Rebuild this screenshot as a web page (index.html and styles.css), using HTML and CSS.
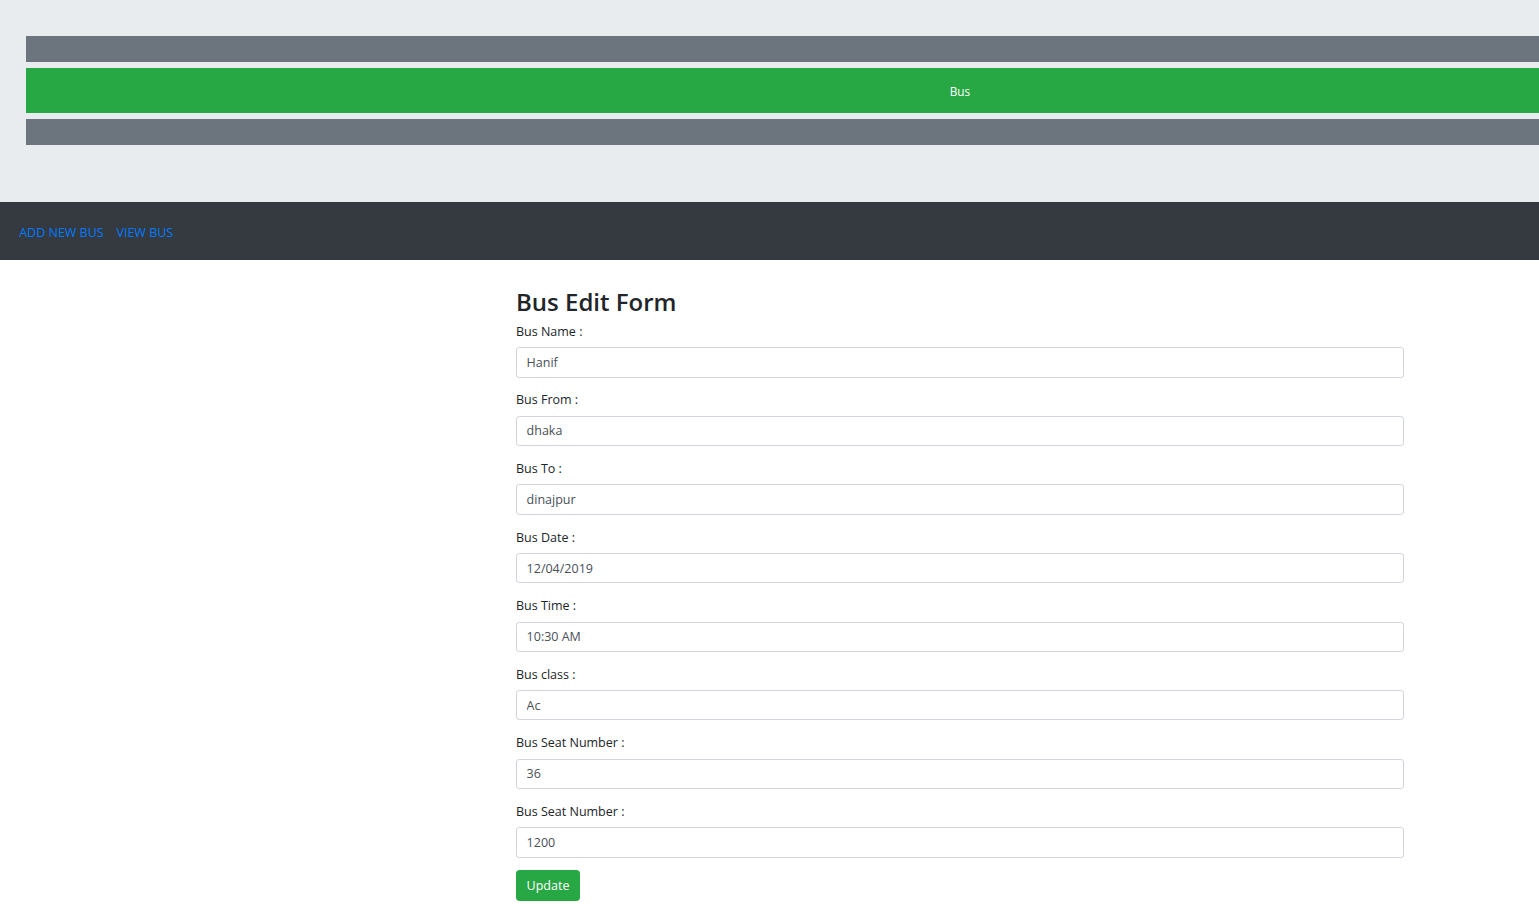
FILE: index.html
```html
<!DOCTYPE html>
<html>
<head>
<meta charset="utf-8">
<link rel="stylesheet" href="styles.css">
</head>
<body>
<div class="page">
  <header class="hero">
    <div class="bar bar-gray"></div>
    <div class="bar bar-green">Bus</div>
    <div class="bar bar-gray"></div>
  </header>
  <nav class="navbar">
    <a class="nav-link" href="#">ADD NEW BUS</a>
    <a class="nav-link" href="#">VIEW BUS</a>
  </nav>
  <main class="container">
    <h2 class="title">Bus Edit Form</h2>
    <form class="form">
      <div class="field"><label>Bus Name :</label><input class="input" type="text" value="Hanif"></div>
      <div class="field"><label>Bus From :</label><input class="input" type="text" value="dhaka"></div>
      <div class="field"><label>Bus To :</label><input class="input" type="text" value="dinajpur"></div>
      <div class="field"><label>Bus Date :</label><input class="input" type="text" value="12/04/2019"></div>
      <div class="field"><label>Bus Time :</label><input class="input" type="text" value="10:30 AM"></div>
      <div class="field"><label>Bus class :</label><input class="input" type="text" value="Ac"></div>
      <div class="field"><label>Bus Seat Number :</label><input class="input" type="text" value="36"></div>
      <div class="field"><label>Bus Seat Number :</label><input class="input" type="text" value="1200"></div>
      <button class="btn" type="button">Update</button>
    </form>
  </main>
</div>
</body>
</html>
```
FILE: styles.css
```css
html, body {
  margin: 0;
  padding: 0;
  overflow: hidden;
  background: #fff;
}
body {
  font-family: "Open Sans", "Noto Sans", sans-serif;
  font-size: 12.5px;
  line-height: 1.5;
  color: #212529;
}
.page {
  width: 1920px;
}
.hero {
  background: #e9ecef;
  height: 202px;
  box-sizing: border-box;
  padding: 36px 26px 0 26px;
  display: flex;
  flex-direction: column;
  gap: 6px;
}
.bar {
  width: 1868px;
}
.bar-gray {
  background: #6c757d;
  height: 26px;
}
.bar-green {
  background: #28a745;
  height: 45px;
  box-sizing: border-box;
  padding-top: 2px;
  color: #fff;
  display: flex;
  align-items: center;
  justify-content: center;
  font-size: 11.8px;
}
.navbar {
  background: #343a40;
  height: 58px;
  box-sizing: border-box;
  padding: 5px 12.8px 0 12.8px;
  display: flex;
  align-items: center;
}
.nav-link {
  color: #007bff;
  text-decoration: none;
  padding: 0 6.4px;
  font-size: 12.5px;
}
.container {
  width: 888px;
  margin: 0 auto;
  padding-top: 28px;
}
.title {
  margin: 0 0 5px 0;
  font-size: 24px;
  font-weight: 600;
  line-height: 1.2;
  letter-spacing: 0;
}
.form {
  display: flex;
  flex-direction: column;
}
.field {
  display: flex;
  flex-direction: column;
  margin-bottom: 12.8px;
}
.field label {
  margin-bottom: 6.4px;
  line-height: 19px;
}
.input {
  height: 30.4px;
  box-sizing: border-box;
  border: 1px solid #ced4da;
  border-radius: 3.2px;
  padding: 0 9.6px;
  font-family: inherit;
  font-size: 12.5px;
  color: #495057;
  background: #fff;
}
.btn {
  align-self: flex-start;
  background: #28a745;
  border: 1px solid #28a745;
  color: #fff;
  border-radius: 3.2px;
  height: 30.4px;
  padding: 0 9.6px;
  font-family: inherit;
  font-size: 12.5px;
}
```
